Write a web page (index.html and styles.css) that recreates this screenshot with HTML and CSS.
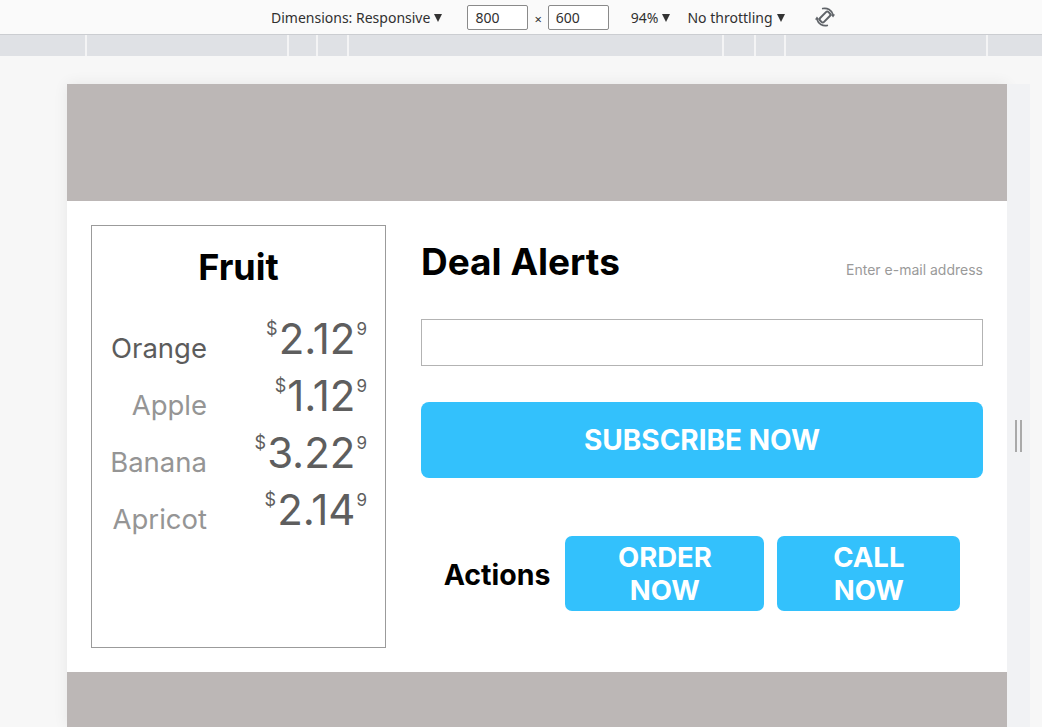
FILE: index.html
```html
<!DOCTYPE html>
<html lang="en">
<head>
<meta charset="utf-8">
<title>Fruit deals</title>
<link rel="stylesheet" href="styles.css">
</head>
<body>
<div class="devtools">
  <div class="toolbar">
    <span class="dd dd-dim">Dimensions: Responsive<span class="caret"></span></span>
    <span class="dim-input dim-w">800</span>
    <span class="times">×</span>
    <span class="dim-input">600</span>
    <span class="dd dd-zoom">94%<span class="caret"></span></span>
    <span class="dd dd-throttle">No throttling<span class="caret"></span></span>
    <svg class="rotate" width="22" height="22" viewBox="0 0 24 24" aria-hidden="true">
      <g fill="none" stroke="#5f6368" stroke-linecap="round">
        <rect x="9" y="5.5" width="6" height="13" rx="2" stroke-width="2.2" transform="rotate(45 12 12)"/>
        <path d="M9.5 2.8 A9.5 9.5 0 0 1 20.8 9.5" stroke-width="1.8"/>
        <path d="M14.5 21.2 A9.5 9.5 0 0 1 3.2 14.5" stroke-width="1.8"/>
      </g>
      <g fill="#5f6368">
        <path d="M18.2 9.2 L23 9.2 L20.8 12.6 Z"/>
        <path d="M5.8 14.8 L1 14.8 L3.2 11.4 Z"/>
      </g>
    </svg>
  </div>
  <div class="ruler">
    <span class="seg s1"></span>
    <span class="seg s2"></span>
    <span class="seg s3"></span>
    <span class="seg s4"></span>
    <span class="seg s5"></span>
    <span class="seg s6"></span>
    <span class="seg s7"></span>
    <span class="seg s8"></span>
    <span class="seg s9"></span>
  </div>
</div>

<div class="stage">
  <div class="viewport">
    <header class="page-header"></header>
    <main class="content">
      <section class="card">
        <h1 class="card-title">Fruit</h1>
        <div class="row">
          <span class="name name-dark">Orange</span>
          <span class="price"><span class="cur">$</span><span class="amt">2.12</span><span class="cents">9</span></span>
        </div>
        <div class="row">
          <span class="name">Apple</span>
          <span class="price"><span class="cur">$</span><span class="amt">1.12</span><span class="cents">9</span></span>
        </div>
        <div class="row">
          <span class="name">Banana</span>
          <span class="price"><span class="cur">$</span><span class="amt">3.22</span><span class="cents">9</span></span>
        </div>
        <div class="row">
          <span class="name">Apricot</span>
          <span class="price"><span class="cur">$</span><span class="amt">2.14</span><span class="cents">9</span></span>
        </div>
      </section>
      <section class="alerts">
        <div class="alerts-head">
          <h2 class="alerts-title">Deal Alerts</h2>
          <label class="email-label" for="email">Enter e-mail address</label>
        </div>
        <input class="email-input" id="email" type="email">
        <button class="btn btn-subscribe" type="button">SUBSCRIBE NOW</button>
        <div class="actions">
          <span class="actions-label">Actions</span>
          <button class="btn btn-small btn-order" type="button"><span>ORDER</span><span>NOW</span></button>
          <button class="btn btn-small btn-call" type="button"><span>CALL</span><span>NOW</span></button>
        </div>
      </section>
    </main>
    <footer class="page-footer"></footer>
  </div>
  <div class="resizer"><span class="handle"></span></div>
</div>
</body>
</html>
```

FILE: styles.css
```css
* { box-sizing: border-box; }

html, body {
  margin: 0;
  padding: 0;
  height: 100%;
  overflow: hidden;
}

body {
  background: #f7f7f7;
  font-family: Inter, "Noto Sans", sans-serif;
}

/* ---------- devtools chrome ---------- */
.devtools {
  font-family: "Noto Sans", "Open Sans", sans-serif;
  font-size: 14px;
  color: #303030;
}

.toolbar {
  height: 35px;
  background: #fafafa;
  border-bottom: 1px solid #cbcdd1;
  display: flex;
  align-items: center;
  padding-left: 271px;
}

.dd {
  display: flex;
  align-items: center;
}

.caret {
  display: inline-block;
  width: 0;
  height: 0;
  border-left: 4.5px solid transparent;
  border-right: 4.5px solid transparent;
  border-top: 8px solid #333;
  margin-left: 4px;
  margin-top: 1px;
}

.dim-input {
  width: 61px;
  height: 25px;
  border: 1px solid #8a8a8a;
  border-radius: 2px;
  background: #fff;
  display: flex;
  align-items: center;
  padding-left: 7px;
}

.dim-w { margin-left: 25px; }

.times {
  margin: 4px 6px 0 6px;
  font-size: 13px;
}

.dd-zoom { margin-left: 22px; }
.dd-throttle { margin-left: 17px; }

.rotate {
  margin-left: 29px;
}

.ruler {
  height: 21px;
  background: #dfe1e5;
  display: flex;
}

.seg {
  height: 100%;
  border-right: 2px solid #f4f4f5;
  flex: none;
}
.s1 { width: 87px; }
.s2 { width: 202px; }
.s3 { width: 29px; }
.s4 { width: 31px; }
.s5 { width: 375px; }
.s6 { width: 32px; }
.s7 { width: 30px; }
.s8 { width: 202px; }
.s9 { flex: 1; border-right: none; }

/* ---------- stage ---------- */
.stage {
  display: flex;
  padding: 28px 0 0 67px;
  height: 671px;
  overflow: hidden;
}

.viewport {
  width: 940px;
  flex: none;
  background: #fff;
  display: flex;
  flex-direction: column;
  box-shadow: 0 0 14px rgba(0, 0, 0, 0.07);
}

.resizer {
  width: 23px;
  flex: none;
  background: #f1f2f4;
  display: flex;
  justify-content: center;
  padding-top: 336px;
}

.handle {
  width: 7px;
  height: 32px;
  border-left: 2px solid #a9a9a9;
  border-right: 2px solid #a9a9a9;
}

.page-header {
  height: 117px;
  background: #bcb7b6;
  flex: none;
}

.page-footer {
  height: 120px;
  background: #bcb7b6;
  flex: none;
}

/* ---------- content ---------- */
.content {
  height: 471px;
  flex: none;
  display: flex;
  gap: 35px;
  padding: 24px;
}

.card {
  width: 295px;
  flex: none;
  border: 1px solid #9b9b9b;
  padding: 20px 18px 0 0;
}

.card-title {
  margin: 0 0 32px 18px;
  font-size: 36px;
  line-height: 42px;
  font-weight: 700;
  text-align: center;
  color: #000;
}

.row {
  display: flex;
  align-items: flex-end;
  justify-content: space-between;
  height: 57px;
  padding-bottom: 12px;
}

.name {
  width: 115px;
  text-align: right;
  font-size: 27.5px;
  line-height: 34px;
  color: #959595;
}

.name-dark { color: #5c5c5c; }

.price {
  display: flex;
  align-items: flex-start;
  color: #5e5e5e;
  margin-bottom: 2px;
}

.cur {
  font-size: 18px;
  line-height: 18px;
  margin-top: 5px;
  margin-right: 1px;
}

.amt {
  font-size: 42px;
  line-height: 48px;
}

.cents {
  font-size: 17px;
  line-height: 17px;
  margin-top: 6px;
  margin-left: 1px;
}

/* ---------- alerts ---------- */
.alerts {
  flex: 1;
  display: flex;
  flex-direction: column;
}

.alerts-head {
  display: flex;
  justify-content: space-between;
  align-items: baseline;
  margin-top: 14px;
}

.alerts-title {
  margin: 0;
  font-size: 37px;
  line-height: 46px;
  font-weight: 700;
  color: #000;
}

.email-label {
  font-size: 14px;
  color: #9a9a9a;
}

.email-input {
  margin-top: 34px;
  height: 47px;
  border: 1px solid #b3b3b3;
  background: #fff;
  font: inherit;
  outline: none;
}

.btn {
  border: none;
  background: #33c1fc;
  color: #fff;
  font-family: Inter, "Noto Sans", sans-serif;
  font-weight: 700;
  cursor: pointer;
}

.btn-subscribe {
  margin-top: 36px;
  height: 76px;
  border-radius: 8px;
  font-size: 28px;
}

.actions {
  margin-top: 58px;
  display: flex;
  align-items: center;
  justify-content: center;
}

.actions-label {
  font-size: 28.5px;
  font-weight: 700;
  color: #000;
  margin-right: 15px;
  margin-top: 1px;
}

.btn-small {
  height: 75px;
  border-radius: 7px;
  font-size: 27.5px;
  line-height: 33px;
  display: flex;
  flex-direction: column;
  align-items: center;
  justify-content: center;
}

.btn-order { width: 199px; }
.btn-call { width: 183px; margin-left: 13px; }
```
